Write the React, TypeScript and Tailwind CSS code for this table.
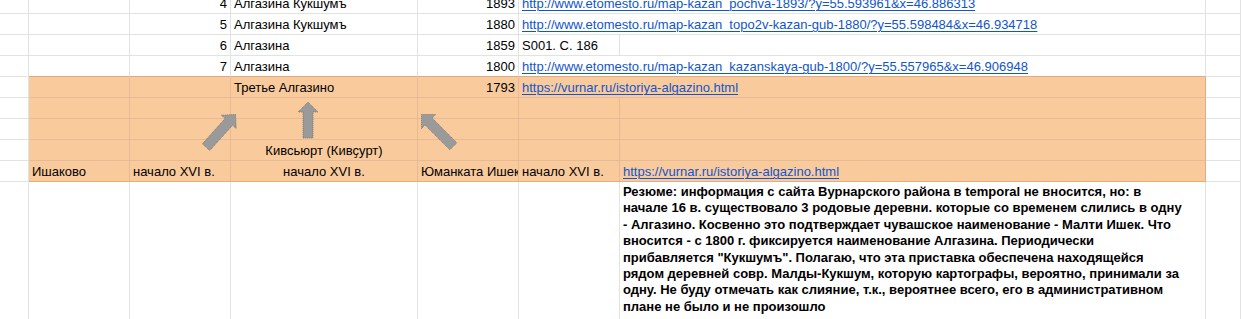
import React from "react";
import clsx from "clsx";

type CellProps = {
  children?: React.ReactNode;
  span2?: boolean;
  right?: boolean;
  center?: boolean;
  orange?: boolean;
  topEdge?: boolean;
  bottomEdge?: boolean;
  rightEdge?: boolean;
  link?: boolean;
};

function Cell({ children, span2, right, center, orange, topEdge, bottomEdge, rightEdge, link }: CellProps) {
  return (
    <div
      className={clsx(
        "flex items-end overflow-hidden whitespace-nowrap border-r border-b px-[3px] pb-[1px] text-[13px] leading-[16px] text-black",
        span2 && "col-span-2",
        right && "justify-end",
        center && "justify-center",
        orange ? "bg-[#f9cb9c] border-[#e6ba94]" : "bg-white border-[#e2e2e2]",
        topEdge && "border-b-[#dfab7f]",
        bottomEdge && "border-b-[#e9ad78]",
        rightEdge && "border-r-[#dfab7f]"
      )}
    >
      {link ? <span className="text-[#1155cc] underline decoration-1 underline-offset-[2px]">{children}</span> : children}
    </div>
  );
}

const row = "grid grid-cols-[29px_101px_101px_187px_101px_101px_586px_1fr]";

const summary = [
  "Резюме: информация с сайта Вурнарского района в temporal не вносится, но: в",
  "начале 16 в. существовало 3 родовые деревни. которые со временем слились в одну",
  "- Алгазино. Косвенно это подтверждает чувашское наименование - Малти Ишек. Что",
  "вносится - с 1800 г. фиксируется наименование Алгазина. Периодически",
  "прибавляется \"Кукшумъ\". Полагаю, что эта приставка обеспечена находящейся",
  "рядом деревней совр. Малды-Кукшум, которую картографы, вероятно, принимали за",
  "одну. Не буду отмечать как слияние, т.к., вероятнее всего, его в административном",
  "плане не было и не произошло",
];

function Arrow({ x, y, angle, len }: { x: number; y: number; angle: number; len: number }) {
  const d = `M0,0 L10,10 L5,10 L5,${len} L-5,${len} L-5,10 L-10,10 Z`;
  return (
    <path
      d={d}
      transform={`translate(${x} ${y}) rotate(${angle})`}
      fill="#9a9a9a"
      stroke="#6f6f6f"
      strokeWidth={0.8}
      strokeDasharray="1 1"
      strokeLinejoin="miter"
    />
  );
}

export default function App() {
  return (
    <div className="relative h-[319px] w-[1241px] overflow-hidden bg-white font-['Liberation_Sans',Arial,sans-serif]">
      <div className={clsx(row, "h-[14px]")}>
        <Cell />
        <Cell />
        <Cell right>4</Cell>
        <Cell>Алгазина Кукшумъ</Cell>
        <Cell right>1893</Cell>
        <Cell span2 link>http://www.etomesto.ru/map-kazan_pochva-1893/?y=55.593961&amp;x=46.886313</Cell>
        <Cell />
      </div>
      <div className={clsx(row, "h-[21px]")}>
        <Cell />
        <Cell />
        <Cell right>5</Cell>
        <Cell>Алгазина Кукшумъ</Cell>
        <Cell right>1880</Cell>
        <Cell span2 link>http://www.etomesto.ru/map-kazan_topo2v-kazan-gub-1880/?y=55.598484&amp;x=46.934718</Cell>
        <Cell />
      </div>
      <div className={clsx(row, "h-[21px]")}>
        <Cell />
        <Cell />
        <Cell right>6</Cell>
        <Cell>Алгазина</Cell>
        <Cell right>1859</Cell>
        <Cell>S001. С. 186</Cell>
        <Cell />
        <Cell />
      </div>
      <div className={clsx(row, "h-[21px]")}>
        <Cell />
        <Cell topEdge />
        <Cell topEdge right>7</Cell>
        <Cell topEdge>Алгазина</Cell>
        <Cell topEdge right>1800</Cell>
        <Cell topEdge span2 link>http://www.etomesto.ru/map-kazan_kazanskaya-gub-1800/?y=55.557965&amp;x=46.906948</Cell>
        <Cell />
      </div>
      <div className={clsx(row, "h-[21px]")}>
        <Cell />
        <Cell orange />
        <Cell orange />
        <Cell orange>Третье Алгазино</Cell>
        <Cell orange right>1793</Cell>
        <Cell orange span2 rightEdge link>https://vurnar.ru/istoriya-algazino.html</Cell>
        <Cell />
      </div>
      {[0, 1].map((i) => (
        <div key={i} className={clsx(row, "h-[21px]")}>
          <Cell />
          <Cell orange />
          <Cell orange />
          <Cell orange />
          <Cell orange />
          <Cell orange />
          <Cell orange rightEdge />
          <Cell />
        </div>
      ))}
      <div className={clsx(row, "h-[21px]")}>
        <Cell />
        <Cell orange />
        <Cell orange />
        <Cell orange center>Кивсьюрт (Кивҫурт)</Cell>
        <Cell orange />
        <Cell orange />
        <Cell orange rightEdge />
        <Cell />
      </div>
      <div className={clsx(row, "h-[21px]")}>
        <Cell />
        <Cell orange bottomEdge>Ишаково</Cell>
        <Cell orange bottomEdge>начало XVI в.</Cell>
        <Cell orange bottomEdge center>начало XVI в.</Cell>
        <Cell orange bottomEdge>Юманката Ишек</Cell>
        <Cell orange bottomEdge>начало XVI в.</Cell>
        <Cell orange bottomEdge rightEdge link>https://vurnar.ru/istoriya-algazino.html</Cell>
        <Cell />
      </div>
      <div className={clsx(row, "h-[133px]")}>
        <Cell />
        <Cell />
        <Cell />
        <Cell />
        <Cell />
        <Cell />
        <div className="flex flex-col justify-start border-r border-b border-[#e2e2e2] px-[3px] pt-[2px] text-[13px] font-bold leading-[16.4px] text-black">
          {summary.map((l, i) => (
            <div key={i} className="whitespace-nowrap">
              {l}
            </div>
          ))}
        </div>
        <Cell />
      </div>
      <div className={clsx(row, "h-[21px]")}>
        <Cell />
        <Cell />
        <Cell />
        <Cell />
        <Cell />
        <Cell />
        <Cell />
        <Cell />
      </div>
      <svg className="pointer-events-none absolute left-0 top-0" width={1241} height={319}>
        <Arrow x={235.5} y={114.5} angle={42} len={44} />
        <Arrow x={308} y={102} angle={0} len={36} />
        <Arrow x={421.5} y={114.5} angle={-45} len={45} />
      </svg>
    </div>
  );
}
